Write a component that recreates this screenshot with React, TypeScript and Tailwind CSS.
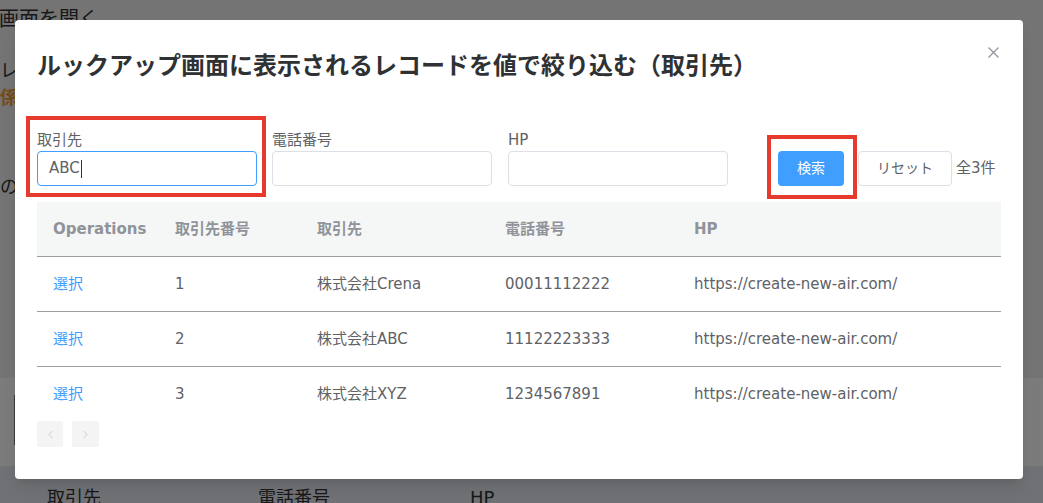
import { ChevronLeft, ChevronRight } from "lucide-react";

interface Account {
  id: number;
  name: string;
  tel: string;
  hp: string;
}

const accounts: Account[] = [
  { id: 1, name: "株式会社Crena", tel: "00011112222", hp: "https://create-new-air.com/" },
  { id: 2, name: "株式会社ABC", tel: "11122223333", hp: "https://create-new-air.com/" },
  { id: 3, name: "株式会社XYZ", tel: "1234567891", hp: "https://create-new-air.com/" },
];

const headers = ["Operations", "取引先番号", "取引先", "電話番号", "HP"];

function Field({ label, value, focused }: { label: string; value?: string; focused?: boolean }) {
  return (
    <div className="w-[220px] shrink-0">
      <div className="text-[15px] leading-[20px] text-[#606266]">{label}</div>
      <div
        className={
          "mt-px flex h-[35px] items-center rounded-[4px] border bg-white pl-[11px] text-[15px] text-[#606266] " +
          (focused ? "border-[#409eff]" : "border-[#dcdfe6]")
        }
      >
        {value}
        {focused && <span className="ml-px h-[18px] w-px bg-[#303133]" />}
      </div>
    </div>
  );
}

export default function App() {
  return (
    <div className="relative h-[503px] w-full overflow-hidden font-['DejaVu_Sans','Noto_Sans_CJK_JP',sans-serif]">
      {/* page behind the dialog */}
      <div className="h-[378px] bg-[#e9e9e9] pt-[7px] text-[#303133]">
        <p className="-ml-[1px] text-[20px] leading-[24px]">画面を開く</p>
        <p className="mt-[28px] text-[18px] leading-[24px]">レイアウト</p>
        <p className="mt-[3px] text-[18px] font-bold leading-[24px] text-[#e6962e]">係者</p>
        <p className="mt-[65px] text-[18px] leading-[24px]">のID</p>
      </div>
      <div className="h-[88px] bg-[#f6f6f6] pt-[17px]">
        <div className="ml-[14px] h-[50px] border-l-2 border-[#7a7a7a]" />
      </div>
      <div className="flex h-[37px] bg-[#dfe3e8] pt-[20px] text-[18px] leading-[24px] text-[#303133]">
        <span className="ml-[47px] w-[211px]">取引先</span>
        <span className="w-[212px]">電話番号</span>
        <span>HP</span>
      </div>

      <div className="absolute inset-0 bg-black/50" />

      {/* dialog */}
      <div className="absolute left-[15px] top-[20px] w-[1008px] rounded-[4px] bg-white px-[22px] pb-[32px] pt-[30px] shadow-lg">
        <h2 className="text-[24px] font-bold leading-[32px] text-[#303133]">
          ルックアップ画面に表示されるレコードを値で絞り込む（取引先）
        </h2>
        <svg className="absolute right-[24px] top-[27px]" width="11" height="11" viewBox="0 0 11 11">
          <path d="M0.5 0.5L10.5 10.5M10.5 0.5L0.5 10.5" stroke="#909399" strokeWidth="1.2" />
        </svg>

        <div className="mt-[48px] flex items-end">
          <Field label="取引先" value="ABC" focused />
          <div className="ml-[15px]">
            <Field label="電話番号" />
          </div>
          <div className="ml-[16px]">
            <Field label="HP" />
          </div>
          <button className="ml-[50px] h-[35px] w-[66px] rounded-[4px] bg-[#409eff] text-[14px] text-white">
            検索
          </button>
          <button className="ml-[14px] h-[35px] w-[94px] rounded-[4px] border border-[#dcdfe6] bg-white text-[14px] text-[#606266]">
            リセット
          </button>
          <span className="ml-[4px] flex h-[35px] items-center text-[15px] text-[#606266]">全3件</span>
        </div>

        <div className="mt-[16px] w-[964px]">
          <div className="grid h-[55px] grid-cols-[122px_142px_188px_189px_1fr] border-b border-[#9e9e9e] bg-[#f5f7f7]">
            {headers.map((h) => (
              <div key={h} className="flex items-center pl-4 text-[15px] font-bold text-[#909399]">
                {h}
              </div>
            ))}
          </div>
          {accounts.map((a, i) => (
            <div
              key={a.id}
              className={
                "grid grid-cols-[122px_142px_188px_189px_1fr] text-[15px] text-[#606266] " +
                (i < accounts.length - 1 ? "h-[55px] border-b border-[#9e9e9e]" : "h-[54px]")
              }
            >
              <div className="flex items-center pl-4 text-[#409eff]">選択</div>
              <div className="flex items-center pl-4">{a.id}</div>
              <div className="flex items-center pl-4">{a.name}</div>
              <div className="flex items-center pl-4">{a.tel}</div>
              <div className="flex items-center pl-4">{a.hp}</div>
            </div>
          ))}
          <div className="flex gap-[9px]">
            <div className="flex h-[26px] w-[26px] items-center justify-center rounded-[2px] bg-[#f4f4f5]">
              <ChevronLeft size={13} strokeWidth={1.5} color="#c0c4cc" />
            </div>
            <div className="flex h-[26px] w-[27px] items-center justify-center rounded-[2px] bg-[#f4f4f5]">
              <ChevronRight size={13} strokeWidth={1.5} color="#c0c4cc" />
            </div>
          </div>
        </div>

        {/* annotation boxes */}
        <div className="pointer-events-none absolute left-[11px] top-[96px] h-[81px] w-[240px] border-4 border-[#e53a2c]" />
        <div className="pointer-events-none absolute left-[752px] top-[115px] h-[64px] w-[90px] border-4 border-[#e53a2c]" />
      </div>
    </div>
  );
}
